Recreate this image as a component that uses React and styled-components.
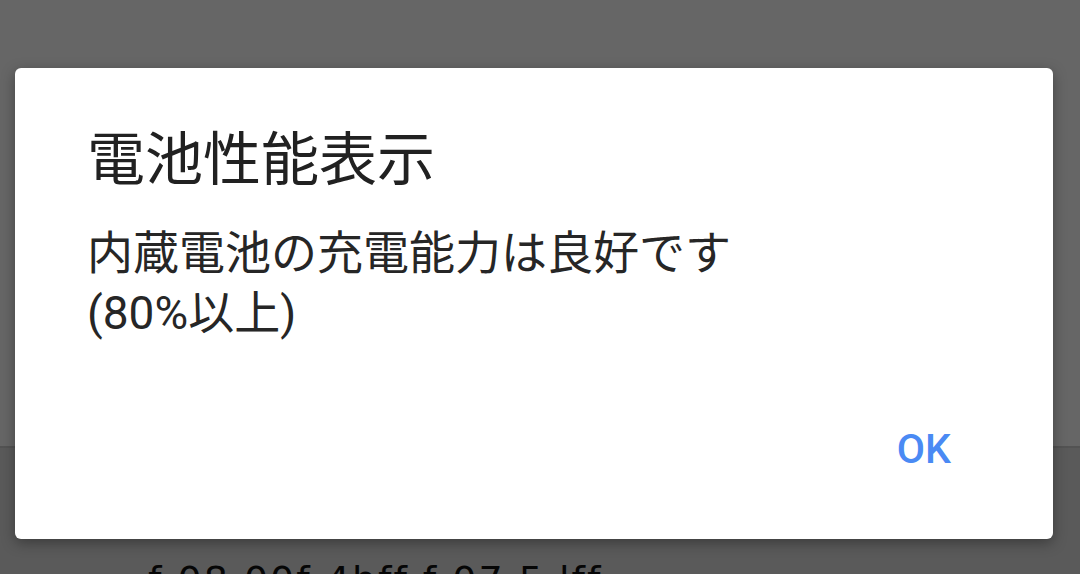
import styled, { createGlobalStyle } from 'styled-components';

const GlobalStyle = createGlobalStyle`
  html, body {
    margin: 0;
    padding: 0;
    width: 1080px;
    height: 574px;
    overflow: hidden;
    background: #ffffff;
  }
  body {
    font-family: Roboto, "Noto Sans CJK JP", "Noto Sans", sans-serif;
  }
`;

const Screen = styled.div`
  position: relative;
  width: 1080px;
  height: 574px;
  overflow: hidden;
  display: flex;
  flex-direction: column;
`;

const TopArea = styled.div`
  flex-shrink: 0;
  height: 446px;
  background: #ffffff;
  border-bottom: 2px solid #d0d0d0;
`;

const ListArea = styled.div`
  flex-shrink: 0;
  background: #e2e2e2;
  padding: 46px 0 40px 148px;
  display: flex;
  flex-direction: column;
  gap: 12px;
`;

const ItemTitle = styled.div`
  font-size: 44px;
  line-height: 52px;
  color: #111;
`;

const ItemValue = styled.div`
  font-family: "DejaVu Sans", sans-serif;
  font-size: 38px;
  line-height: 44px;
  color: #111;
  letter-spacing: 2px;
`;

const Overlay = styled.div`
  position: absolute;
  inset: 0;
  background: rgba(0, 0, 0, 0.6);
`;

const Dialog = styled.div`
  position: absolute;
  left: 15px;
  top: 68px;
  width: 1038px;
  height: 471px;
  box-sizing: border-box;
  background: #ffffff;
  border-radius: 6px;
  box-shadow: 0 4px 14px rgba(0, 0, 0, 0.35);
  display: flex;
  flex-direction: column;
  padding: 59px 0 0 72px;
`;

const Title = styled.h2`
  margin: 0;
  font-weight: 400;
  font-size: 58px;
  line-height: 66px;
  color: #212121;
`;

const Message = styled.p`
  margin: 30px 0 0;
  font-size: 46px;
  line-height: 60px;
  color: #262626;
`;

const Actions = styled.div`
  margin-top: auto;
  display: flex;
  justify-content: flex-end;
  padding: 0 86px 57px 0;
`;

const TextButton = styled.button`
  border: none;
  background: none;
  padding: 8px 16px;
  font-family: Roboto, sans-serif;
  font-weight: 500;
  font-size: 41px;
  line-height: 50px;
  color: #4a8af4;
  cursor: pointer;
`;

export default function App() {
  return (
    <>
      <GlobalStyle />
      <Screen>
        <TopArea />
        <ListArea>
          <ItemTitle>バッテリー情報</ItemTitle>
          <ItemValue>f 08 00f 4bff f 07 5 lff</ItemValue>
        </ListArea>
        <Overlay />
        <Dialog>
          <Title>電池性能表示</Title>
          <Message>
            内蔵電池の充電能力は良好です
            <br />
            (80%以上)
          </Message>
          <Actions>
            <TextButton>OK</TextButton>
          </Actions>
        </Dialog>
      </Screen>
    </>
  );
}
